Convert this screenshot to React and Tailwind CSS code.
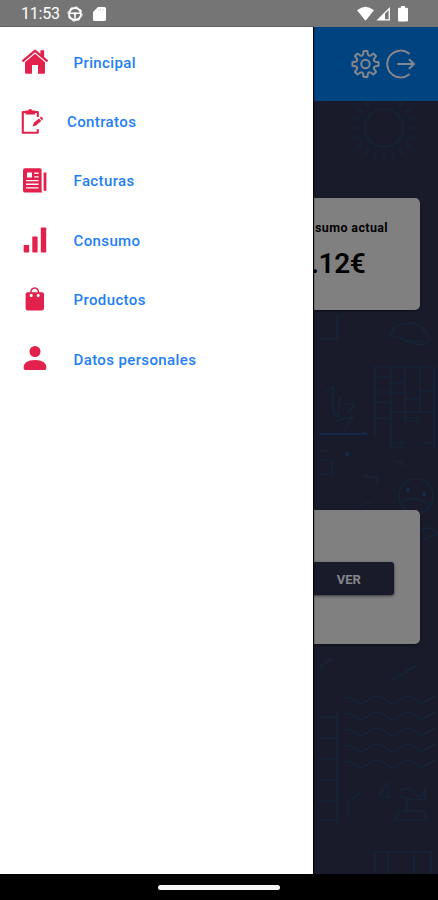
const menuItems = [
  { label: 'Principal', Icon: HomeIcon, gap: 'pl-[25px]' },
  { label: 'Contratos', Icon: ContractIcon, gap: 'pl-[18.5px]' },
  { label: 'Facturas', Icon: InvoiceIcon, gap: 'pl-[25px]' },
  { label: 'Consumo', Icon: UsageIcon, gap: 'pl-[25px]' },
  { label: 'Productos', Icon: BagIcon, gap: 'pl-[25px]' },
  { label: 'Datos personales', Icon: PersonIcon, gap: 'pl-[25px]' },
];

function HomeIcon() {
  return (
    <svg width="28" height="28" viewBox="0 0 28 28" fill="currentColor">
      <path d="M14 1.2 0.7 12.6l1.5 1.6L14 4.2l11.8 10 1.5-1.6-4.2-3.7V2.3h-3.7v3.5z" />
      <path d="M14 5.8 4 14.2v10.3q0 1.3 1.3 1.3H11v-8.9h6v8.9h5.7q1.3 0 1.3-1.3V14.2z" />
    </svg>
  );
}

function ContractIcon() {
  return (
    <svg width="28" height="28" viewBox="0 0 28 28">
      <path
        d="M6 4H1.8v20.8h15v-3.6M16.8 9V4H13"
        fill="none"
        stroke="currentColor"
        strokeWidth="2.1"
        strokeLinejoin="round"
      />
      <path d="M4.5 2.5h2.6Q7.6 1 9.3 1t2.2 1.5h2.6v4H4.5z" fill="currentColor" />
      <path d="m11.6 18.4 1.2-3.6 5.2-4.4 2.3 2.6-5.3 4.5zM18.7 9.7l.8-.7q.7-.5 1.3.1l.9 1q.6.7 0 1.3l-.8.8z" fill="currentColor" />
    </svg>
  );
}

function InvoiceIcon() {
  return (
    <svg width="28" height="28" viewBox="0 0 28 28">
      <path
        fillRule="evenodd"
        d="M4 1.2h15q1.6 0 1.6 1.6v20.5q0 1.2 1 2.3H4.6Q2 25.6 2 23V3.2q0-2 2-2zm2 4.3v5h5v-5zm7.2.1v1.3h4.4V5.6zm0 3.7v1.3h4.4V9.3zM5 12.9v1.3h12.6v-1.3zm0 3.7v1.3h12.6v-1.3zm0 3.7v1.3h12.6v-1.3z"
        fill="currentColor"
      />
      <path d="M22.6 5.5h2.8v17.2q0 1.4-1.4 1.4t-1.4-1.4z" fill="currentColor" />
    </svg>
  );
}

function UsageIcon() {
  return (
    <svg width="28" height="28" viewBox="0 0 28 28" fill="currentColor">
      <rect x="2.7" y="18" width="5.5" height="7.5" rx=".7" />
      <rect x="11.3" y="9.5" width="5.3" height="16" rx=".7" />
      <rect x="19.8" y=".6" width="5.4" height="24.9" rx=".7" />
    </svg>
  );
}

function BagIcon() {
  return (
    <svg width="28" height="28" viewBox="0 0 28 28">
      <path
        fillRule="evenodd"
        d="M6.4 6.2h14.8q1.8 0 1.8 1.8v14.6q0 1.8-1.8 1.8H6.4q-1.8 0-1.8-1.8V8q0-1.8 1.8-1.8zm3.8 1.6a1.5 1.7 0 1 0 0 3.4 1.5 1.7 0 0 0 0-3.4zm7 0a1.5 1.7 0 1 0 0 3.4 1.5 1.7 0 0 0 0-3.4z"
        fill="currentColor"
      />
      <path d="M9.7 7.5q.2-5.5 4-5.5t4 5.5" fill="none" stroke="currentColor" strokeWidth="1.5" />
    </svg>
  );
}

function PersonIcon() {
  return (
    <svg width="28" height="28" viewBox="0 0 28 28" fill="currentColor">
      <circle cx="14" cy="6.5" r="5.5" />
      <path d="M2.6 23q0-8 11.4-8t11.4 8q0 1.9-1.7 1.9H4.3q-1.7 0-1.7-1.9z" />
    </svg>
  );
}

function StatusBar() {
  return (
    <header className="h-[27px] shrink-0 bg-[#757575] flex items-center pl-[21px] pr-[30px] pt-px text-white">
      <span className="w-[39px] text-base leading-none tracking-[-0.2px]">11:53</span>
      <svg className="ml-[7px]" width="16" height="16" viewBox="0 0 16 16" fill="none" stroke="currentColor">
        <circle cx="8" cy="8" r="6" strokeWidth="1.9" />
        <circle cx="8" cy="8" r="7.2" strokeWidth=".8" strokeDasharray="2.8 2.85" />
        <path d="M3 7.2h10M8 7v6" strokeWidth="1.5" />
        <circle cx="8" cy="7.8" r="1.4" fill="currentColor" stroke="none" />
      </svg>
      <svg className="ml-[10px]" width="13" height="16" viewBox="0 0 13 16" fill="currentColor">
        <path d="M5 1h6.5Q13 1 13 2.5v11q0 1.5-1.5 1.5h-10Q0 15 0 13.5V6z" />
        <path d="M5 3.2V5M7.5 3.2V5M10 3.2V5" stroke="#ccc" strokeWidth=".8" />
      </svg>
      <svg className="ml-auto" width="17" height="16" viewBox="0 0 17 16" fill="currentColor">
        <path d="M0 4.3q8.5-7 17 0L8.5 14.8z" />
      </svg>
      <svg className="ml-[2px]" width="15" height="16" viewBox="0 0 15 16">
        <path d="M13.3 2.5v11.3H2z" fill="none" stroke="currentColor" strokeWidth="1.3" />
        <path d="M9 7v7H2z" fill="currentColor" />
      </svg>
      <svg className="ml-[7px]" width="10" height="16" viewBox="0 0 10 16" fill="currentColor">
        <rect x="3" width="4" height="3" />
        <rect y="1.8" width="10" height="13.7" rx="1.3" />
      </svg>
    </header>
  );
}

function Drawer() {
  return (
    <nav className="w-[313px] shrink-0 bg-white pt-[5.7px] shadow-[1px_0_1px_#000] z-10">
      {menuItems.map(({ label, Icon, gap }) => (
        <a key={label} className="h-[59.4px] flex items-center pl-[20.5px]">
          <span className="text-[#e2224c]">
            <Icon />
          </span>
          <span className={`${gap} pt-px text-[15px] font-medium tracking-[0.38px] text-[#1f80f5]`}>{label}</span>
        </a>
      ))}
    </nav>
  );
}

// faint line drawings behind the cards
function Backdrop() {
  const rays = Array.from({ length: 20 }, (_, i) => i * 18);
  return (
    <svg className="absolute inset-0" width="125" height="773" viewBox="313 101 125 773" fill="none" stroke="#10324f" strokeWidth="1.2" opacity="0.5">
      <circle cx="384" cy="128" r="19" />
      {rays.map((a) => (
        <path key={a} d="M384 102v-8" transform={`rotate(${a} 384 128)`} />
      ))}
      <path d="M322 246h3M328 245h4" stroke="#0d3c68" strokeWidth="2" />
      <path d="M318 339h19v-25M391 332c8-12 26-12 35 0s-5 16-17 9-20-1-18-9M402 341h22" />
      <path d="M375 435v-68h59M375 377h15M391 369v78h14M405 367v54h15M420 369v43h14M434 367v80M375 392h16M391 383h14M391 393h14M405 399h15M420 391h14M375 402h16M375 418h16M391 412h29M405 418h15M391 443h14M421 443h13" />
      <path d="M326 392l7-5v25l6 6M340 397l-2 20M336 421l17-4-8 11v3M345 403l9 2-6 7" />
      <path d="M319 434h47l-3-2" stroke="#0c4075" strokeWidth="1.5" />
      <path d="M320 451h9M320 460h12v14h-12M363 475l14 3v5M395 461l12 4M360 505l12-3" />
      <path d="M347 452v4" stroke="#0c4075" strokeWidth="3" />
      <circle cx="416" cy="496" r="17" />
      <path d="M402 501q14-7 27 4" />
      <path d="M408 488v4M424 492v4" stroke="#0c4075" strokeWidth="3" />
      <path d="M421 531q8-7 17 2M423 540l15-6M391 680l12-6 14-10M320 667l12-8" />
      {[699, 715, 731, 747, 763].map((y) => (
        <path key={y} d={`M345 ${y}c6-6 10 4 16 4 8 0 9-7 16-7s9 7 16 7 8-7 15-7 8 7 14 7 8-8 15-7`} />
      ))}
      <path d="M337 711v112M317 717h20M317 738h20M317 759h20M317 780h20M317 801h20M317 820h20" />
      <path d="M348 814v-12l13-10M379 795l8-12 2 15-10-3M400 791q7-7 14 2t11-4v10l-12 1-13-4M407 799v12M395 820l4-9h24l4 9zM375 872v-20h56v22M388 852v22M414 850v24" />
    </svg>
  );
}

function gearPoint(angle, radius) {
  const rad = (angle * Math.PI) / 180;
  return `${(14.5 + radius * Math.sin(rad)).toFixed(2)} ${(15 - radius * Math.cos(rad)).toFixed(2)}`;
}

const gearPath = Array.from({ length: 8 }, (_, i) => {
  const a = i * 45;
  return `${i ? 'L' : 'M'}${gearPoint(a - 13, 10.3)}L${gearPoint(a - 8, 13.2)}L${gearPoint(a + 8, 13.2)}L${gearPoint(a + 13, 10.3)}Q${gearPoint(a + 22.5, 8)} ${gearPoint(a + 32, 10.3)}`;
}).join('');

function Toolbar() {
  return (
    <div className="h-[74px] shrink-0 bg-[#004381] flex items-center pl-[38px] gap-[6px] text-[#85878c]">
      <svg width="29" height="30" viewBox="0 0 29 30" fill="none" stroke="currentColor" strokeWidth="2" strokeLinejoin="round">
        <path d={`${gearPath}Z`} />
        <circle cx="14.5" cy="15" r="4.2" />
      </svg>
      <svg width="30" height="30" viewBox="0 0 30 30" fill="none" stroke="currentColor" strokeWidth="2" strokeLinecap="round">
        <path d="M23 4.5A13.4 13.4 0 1 0 23 25.5M12 15h16M23.5 10.7 28 15l-4.5 4.3" />
      </svg>
    </div>
  );
}

function Dashboard() {
  return (
    <main className="flex-1 min-w-0 flex flex-col">
      <Toolbar />
      <div className="relative flex-1 bg-[#191b2a]">
        <Backdrop />
        <section className="relative mt-[97px] mr-[18px] h-[112px] rounded-r-[5px] bg-[#808080] pt-[21px] text-black shadow-[0_1px_2px_#0c0e18]">
          <p className="pl-[2px] text-[12.5px] leading-[18px] font-bold tracking-[0.38px] whitespace-nowrap">sumo actual</p>
          <p className="-ml-[2px] mt-[8px] text-[28px] leading-[38px] font-semibold tracking-[-0.4px]">.12€</p>
        </section>
        <section className="relative mt-[200px] mr-[18px] h-[134px] rounded-r-[5px] bg-[#808080] flex items-center shadow-[0_1px_2px_#0c0e18]">
          <button className="w-[80.5px] h-[33px] mt-[3px] rounded-r-[3px] bg-[#191b2a] pr-[9px] pt-[2px] text-[13px] font-bold text-[#85868a] shadow-[0_1px_3px_#333]">
            VER
          </button>
        </section>
      </div>
    </main>
  );
}

export default function App() {
  return (
    <div className="w-full h-[900px] flex flex-col bg-black font-['Roboto',sans-serif] overflow-hidden">
      <StatusBar />
      <div className="flex-1 min-h-0 flex">
        <Drawer />
        <Dashboard />
      </div>
      <footer className="h-[26px] shrink-0 flex items-center justify-center">
        <div className="w-[122px] h-[5px] rounded-full bg-[#f5f5f5]" />
      </footer>
    </div>
  );
}
